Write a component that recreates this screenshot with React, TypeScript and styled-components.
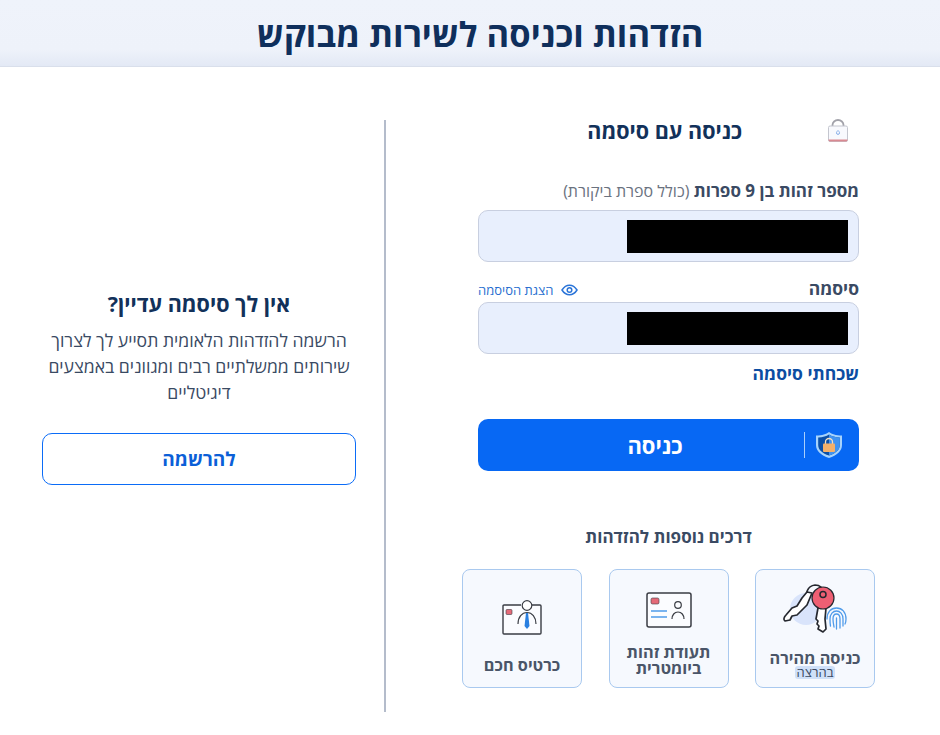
import React from 'react';
import styled, { createGlobalStyle } from 'styled-components';

const GlobalStyle = createGlobalStyle`
	html, body {
		margin: 0;
		padding: 0;
		background: #fff;
	}
	body {
		font-family: 'Open Sans', 'Liberation Sans', 'DejaVu Sans', sans-serif;
		color: #12315a;
	}
`;

function LockIcon() {
	return (
		<svg width="22" height="24" viewBox="0 0 22 24" fill="none">
			<path d="M5.500 8V6a5.500 5 0 0 1 11 0v2" stroke="#a2a2aa" strokeWidth="1.800" />
			<rect x="1.500" y="7" width="19" height="15.500" rx="1.500" fill="#f8f9fd" stroke="#c4c6cf" />
			<path d="M1.500 20.500h19v.5a1.500 1.500 0 0 1-1.500 1.500H3A1.500 1.500 0 0 1 1.500 21z" fill="#d98a92" />
			<path d="M11 11.500c1 1 1.500 1.600 1.500 2.400a1.500 1.500 0 0 1-3 0c0-.8.500-1.400 1.500-2.400z" stroke="#6a9be2" strokeWidth=".8" />
		</svg>
	);
}

function EyeIcon() {
	return (
		<svg width="17" height="12" viewBox="0 0 17 12" fill="none">
			<path d="M1 6c2-3.200 4.500-4.800 7.500-4.800S14 2.800 16 6c-2 3.200-4.500 4.800-7.500 4.800S3 9.200 1 6z" stroke="#2a74d8" strokeWidth="1.500" />
			<circle cx="8.500" cy="6" r="2.300" stroke="#2a74d8" strokeWidth="1.500" />
		</svg>
	);
}

function ShieldIcon() {
	return (
		<svg width="28" height="28" viewBox="0 0 28 28" fill="none">
			<path d="M14 1c3 2.200 6.500 3.300 13 3.500v9.500c0 6-5 10.500-13 13C6 24.500 1 20 1 14V4.500C7.500 4.300 11 3.200 14 1z" fill="#a6d3fc" />
			<path d="M14 3.500c2.600 1.800 6 2.700 10.800 3v7.500c0 4.800-4.300 8.500-10.800 10.600C7.500 22.500 3.200 18.800 3.200 14V6.500C8 6.200 11.400 5.300 14 3.500z" fill="#0b4fa6" />
			<path d="M14 3.500c2.600 1.800 6 2.700 10.800 3v7.500c0 4.800-4.300 8.500-10.800 10.600z" fill="#3f93f2" />
			<path d="M10.500 13v-2a3.500 3.500 0 0 1 7 0v2" stroke="#f6dfc0" strokeWidth="1.300" />
			<rect x="8" y="12.500" width="12" height="8.500" rx="1" fill="#f3b06a" />
		</svg>
	);
}

function KeysIcon() {
	return (
		<svg width="68" height="54" viewBox="0 0 68 54" fill="none">
			<circle cx="25" cy="27" r="16" fill="#d9e4fb" />
			<path d="M27 17c-3-5-1-13 7-14 5 0 8 3 9 8" stroke="#25282f" strokeWidth="1.700" />
			<path d="M31 11L26 23l-7 7-3 3-5 1-2 4-5 1c-2-1-1-4 1-6l6-7 5-2 5-8 5-6z" fill="#fff" stroke="#25282f" strokeWidth="1.700" strokeLinejoin="round" />
			<path d="M37 26h8l-1 11 1 10-3 3-5-3 1-3-2-2 1-3-2-2z" fill="#fff" stroke="#25282f" strokeWidth="1.700" strokeLinejoin="round" />
			<circle cx="42" cy="16" r="11" fill="#ee5f73" stroke="#25282f" strokeWidth="1.200" />
			<circle cx="42" cy="12.500" r="3" stroke="#25282f" strokeWidth="1.500" />
			<path d="M46 37c0-7 4-11 9.500-11S65 30 65 37c0 2 0 3-1 5M49.500 44c-.5-2-.5-5-.5-7 0-5 3-8 6.500-8s6.500 3 6.500 8v7M53 45c-.5-3-1-5-1-8 0-3 1.500-5 3.500-5s3.500 2 3.500 5v9M55.500 36v11" stroke="#4f9bea" strokeWidth="1.300" strokeLinecap="round" />
		</svg>
	);
}

function BiometricIcon() {
	return (
		<svg width="46" height="36" viewBox="0 0 46 36" fill="none">
			<rect x="1" y="1" width="44" height="34" rx="2" fill="#fbfcff" stroke="#3a3d44" strokeWidth="1.500" />
			<rect x="5" y="6" width="8" height="6" rx="1.500" fill="#e56a78" stroke="#3a3d44" strokeWidth=".6" />
			<path d="M5 19h16M5 25h16" stroke="#4f9bea" strokeWidth="1.400" />
			<circle cx="32" cy="13" r="3.300" stroke="#3a3d44" strokeWidth="1.200" />
			<path d="M26 27c0-4 2.500-7 6-7s6 3 6 7" stroke="#3a3d44" strokeWidth="1.200" />
		</svg>
	);
}

function SmartCardIcon() {
	return (
		<svg width="40" height="36" viewBox="0 0 40 36" fill="none">
			<path d="M19 5H1.500v29h37V5H30" fill="#fbfcff" />
			<path d="M19 5H2a1 1 0 0 0-1 1v27a1 1 0 0 0 1 1h36a1 1 0 0 0 1-1V6a1 1 0 0 0-1-1h-8" stroke="#3a3d44" strokeWidth="1.400" />
			<circle cx="25" cy="5.500" r="4.800" fill="#fff" stroke="#3a3d44" strokeWidth="1.200" />
			<rect x="4" y="9.500" width="6" height="5" rx="1" fill="#e56a78" stroke="#3a3d44" strokeWidth=".6" />
			<path d="M16 24c0-7 4-11.500 9-11.500S34 17 34 24" stroke="#3a3d44" strokeWidth="1.200" />
			<path d="M24 13h2l1.500 13-2.500 3-2.500-3z" fill="#2a7fe0" />
		</svg>
	);
}

export default function App() {
	return (
		<Page dir="rtl">
			<GlobalStyle />
			<Header>
				<h1>הזדהות וכניסה לשירות מבוקש</h1>
			</Header>
			<Main>
				<LoginColumn>
					<LoginForm>
						<LoginHeading>
							<LockIcon />
							<h2>כניסה עם סיסמה</h2>
						</LoginHeading>
						<IdLabel>
							מספר זהות בן 9 ספרות <span>(כולל ספרת ביקורת)</span>
						</IdLabel>
						<Field>
							<Redaction />
						</Field>
						<PasswordLabel>
							<strong>סיסמה</strong>
							<ShowPassword>
								<EyeIcon />
								<span>הצגת הסיסמה</span>
							</ShowPassword>
						</PasswordLabel>
						<Field>
							<Redaction />
						</Field>
						<Forgot>שכחתי סיסמה</Forgot>
						<Submit>
							<SubmitIcon>
								<ShieldIcon />
							</SubmitIcon>
							<SubmitText>כניסה</SubmitText>
						</Submit>
					</LoginForm>
					<MoreTitle>דרכים נוספות להזדהות</MoreTitle>
					<Methods>
						<Method $bottom={13}>
							<MethodIcon $top={12}>
								<KeysIcon />
							</MethodIcon>
							<MethodText>כניסה מהירה</MethodText>
							<Recommended>בהרצה</Recommended>
						</Method>
						<Method $bottom={11}>
							<MethodIcon $top={22}>
								<BiometricIcon />
							</MethodIcon>
							<MethodText>
								תעודת זהות
								<br />
								ביומטרית
							</MethodText>
						</Method>
						<Method $bottom={14}>
							<MethodIcon $top={30}>
								<SmartCardIcon />
							</MethodIcon>
							<MethodText>כרטיס חכם</MethodText>
						</Method>
					</Methods>
				</LoginColumn>
				<SignupColumn>
					<h3>אין לך סיסמה עדיין?</h3>
					<p>
						הרשמה להזדהות הלאומית תסייע לך לצרוך
						<br />
						שירותים ממשלתיים רבים ומגוונים באמצעים
						<br />
						דיגיטליים
					</p>
					<SignupButton>להרשמה</SignupButton>
				</SignupColumn>
			</Main>
		</Page>
	);
}

const Page = styled.div`
	width: 940px;
	height: 735px;
	overflow: hidden;
`;

const Header = styled.header`
	height: 67px;
	box-sizing: border-box;
	display: flex;
	align-items: center;
	justify-content: center;
	padding-left: 20px;
	background: linear-gradient(#eff3fb 0, #eef2fa 75%, #e3e9f5 100%);
	border-bottom: 1px solid #d9dfeb;
	h1 {
		margin: 0;
		font-size: 34.5px;
		font-weight: 700;
		color: #0f2f5c;
	}
`;

const Main = styled.main`
	display: flex;
	padding-top: 53px;
`;

const LoginColumn = styled.section`
	width: 556px;
	height: 592px;
	box-sizing: border-box;
	padding: 0 65px 0 76px;
	border-left: 2px solid #b4bccb;
`;

const LoginForm = styled.div`
	margin: 0 16px;
`;

const LoginHeading = styled.div`
	display: flex;
	align-items: center;
	height: 22px;
	padding-right: 10px;
	h2 {
		margin: 0 85px 0 0;
		font-size: 21.5px;
		line-height: 22px;
		font-weight: 700;
		color: #12315a;
	}
`;

const IdLabel = styled.div`
	margin-top: 39px;
	height: 20px;
	line-height: 20px;
	font-size: 17px;
	font-weight: 700;
	color: #3a4a63;
	span {
		font-weight: 400;
		font-size: 16px;
		color: #6a7280;
	}
`;

const Field = styled.div`
	height: 52px;
	box-sizing: border-box;
	margin-top: 9px;
	display: flex;
	align-items: center;
	padding-right: 10px;
	background: #e8effd;
	border: 1px solid #c8cfe0;
	border-radius: 10px;
`;

const Redaction = styled.div`
	width: 221px;
	height: 33px;
	background: #000;
`;

const PasswordLabel = styled.div`
	margin-top: 16px;
	height: 20px;
	display: flex;
	align-items: center;
	justify-content: space-between;
	margin-bottom: -5px;
	strong {
		font-size: 17.5px;
		font-weight: 700;
		color: #3a4a63;
	}
`;

const ShowPassword = styled.div`
	display: flex;
	align-items: center;
	gap: 8px;
	margin-top: 4px;
	font-size: 13px;
	color: #2a6fd0;
`;

const Forgot = styled.div`
	margin-top: 9px;
	height: 20px;
	line-height: 20px;
	font-size: 17.5px;
	font-weight: 700;
	color: #0c4da2;
`;

const Submit = styled.div`
	margin-top: 36px;
	height: 52px;
	display: flex;
	align-items: center;
	background: #0768f4;
	border-radius: 10px;
`;

const SubmitIcon = styled.div`
	width: 55px;
	height: 26px;
	box-sizing: border-box;
	padding-right: 6px;
	border-left: 1px solid #a9cffb;
	display: flex;
	align-items: center;
	justify-content: center;
`;

const SubmitText = styled.div`
	flex: 1;
	padding-left: 28px;
	text-align: center;
	font-size: 22px;
	font-weight: 700;
	color: #fff;
`;

const MoreTitle = styled.div`
	margin-top: 55px;
	height: 22px;
	line-height: 22px;
	text-align: center;
	font-size: 17px;
	font-weight: 700;
	color: #3a4a63;
`;

const Methods = styled.div`
	margin-top: 21px;
	display: flex;
	justify-content: space-between;
`;

const Method = styled.div<{ $bottom: number }>`
	position: relative;
	width: 120px;
	height: 119px;
	box-sizing: border-box;
	display: flex;
	flex-direction: column;
	align-items: center;
	justify-content: flex-end;
	padding-bottom: ${(p) => p.$bottom}px;
	background: #f6f9fe;
	border: 1px solid #a9c9ef;
	border-radius: 8px;
`;

const MethodIcon = styled.div<{ $top: number }>`
	position: absolute;
	top: ${(p) => p.$top}px;
	left: 0;
	right: 0;
	display: flex;
	justify-content: center;
`;

const MethodText = styled.div`
	text-align: center;
	font-size: 16.3px;
	line-height: 16px;
	font-weight: 700;
	color: #4a5568;
`;

const Recommended = styled.div`
	margin-bottom: -5px;
	padding: 0 2px;
	font-size: 13px;
	line-height: 13px;
	color: #3a4a63;
	background: #cfe0f8;
	border-radius: 3px;
`;

const SignupColumn = styled.section`
	width: 384px;
	box-sizing: border-box;
	padding: 171px 28px 0 42px;
	text-align: center;
	h3 {
		margin: 0;
		font-size: 21.5px;
		line-height: 26px;
		font-weight: 700;
		color: #12315a;
	}
	p {
		margin: 10px 0 0;
		font-size: 17.6px;
		line-height: 26px;
		color: #3a4a63;
	}
`;

const SignupButton = styled.div`
	margin-top: 28px;
	height: 52px;
	box-sizing: border-box;
	display: flex;
	align-items: center;
	justify-content: center;
	border: 1px solid #0b6cf7;
	border-radius: 10px;
	font-size: 19px;
	font-weight: 700;
	color: #0b5fd8;
`;
